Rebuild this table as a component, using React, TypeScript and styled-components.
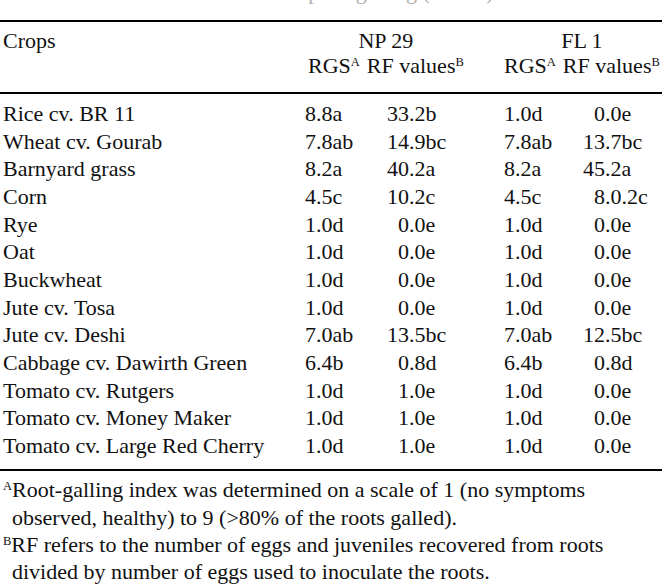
import React from "react";
import styled, { createGlobalStyle } from "styled-components";

const Global = createGlobalStyle`
  html, body { margin: 0; padding: 0; background: #ffffff; overflow: hidden; }
  body { font-family: "Liberation Serif", "Times New Roman", serif; color: #111; }
`;

const Page = styled.div`
  width: 666px;
  height: 586px;
  overflow: hidden;
  font-size: 22px;
`;

const Caption = styled.div`
  margin-top: -20px;
  height: 24px;
  line-height: 24px;
  text-align: center;
  white-space: nowrap;
  color: #b0b0b0;
`;

const Table = styled.div`
  margin-top: 16px;
  width: 662px;
  border-top: 2px solid #000;
  border-bottom: 2px solid #000;
`;

const Head = styled.div`
  display: grid;
  grid-template-columns: 308px 196px 1fr;
  padding: 6px 0 14px;
  border-bottom: 2px solid #000;
  line-height: 25px;
  white-space: nowrap;
`;

const HeadName = styled.div`
  padding-left: 3px;
`;

const Group = styled.div`
  display: inline-flex;
  flex-direction: column;
  align-items: center;
  justify-self: start;
`;

const SubRow = styled.div`
  display: flex;
  gap: 7px;
`;

const Sup = styled.sup`
  font-size: 12.5px;
  line-height: 0;
  vertical-align: 7px;
`;

const Body = styled.div`
  padding: 6px 0 9.5px;
`;

const Row = styled.div`
  display: grid;
  grid-template-columns: 305px 60px 139px 56px 1fr;
  line-height: 27.67px;
  white-space: nowrap;
`;

const Name = styled.div`
  padding-left: 3px;
`;

const Cell = styled.div``;

const Dec = styled.div`
  display: flex;
`;

const IntPart = styled.span<{ $w: number }>`
  flex: none;
  width: ${(p) => p.$w}px;
  text-align: right;
`;

const FracPart = styled.span``;

const Notes = styled.div`
  margin-top: 5px;
  width: 662px;
`;

const Note = styled.p`
  margin: 0;
  padding-left: 12px;
  text-indent: -9px;
  line-height: 27.3px;
`;

type Rec = [string, string, string, string, string];

const rows: Rec[] = [
  ["Rice cv. BR 11", "8.8a", "33.2b", "1.0d", "0.0e"],
  ["Wheat cv. Gourab", "7.8ab", "14.9bc", "7.8ab", "13.7bc"],
  ["Barnyard grass", "8.2a", "40.2a", "8.2a", "45.2a"],
  ["Corn", "4.5c", "10.2c", "4.5c", "8.0.2c"],
  ["Rye", "1.0d", "0.0e", "1.0d", "0.0e"],
  ["Oat", "1.0d", "0.0e", "1.0d", "0.0e"],
  ["Buckwheat", "1.0d", "0.0e", "1.0d", "0.0e"],
  ["Jute cv. Tosa", "1.0d", "0.0e", "1.0d", "0.0e"],
  ["Jute cv. Deshi", "7.0ab", "13.5bc", "7.0ab", "12.5bc"],
  ["Cabbage cv. Dawirth Green", "6.4b", "0.8d", "6.4b", "0.8d"],
  ["Tomato cv. Rutgers", "1.0d", "1.0e", "1.0d", "0.0e"],
  ["Tomato cv. Money Maker", "1.0d", "1.0e", "1.0d", "0.0e"],
  ["Tomato cv. Large Red Cherry", "1.0d", "1.0e", "1.0d", "0.0e"],
];

function Decimal({ value, w }: { value: string; w: number }) {
  const i = value.indexOf(".");
  return (
    <Dec>
      <IntPart $w={w}>{value.slice(0, i)}</IntPart>
      <FracPart>{value.slice(i)}</FracPart>
    </Dec>
  );
}

export default function App() {
  return (
    <Page>
      <Global />
      <Caption>Reaction of crops to galling (n = 10)</Caption>
      <Table>
        <Head>
          <HeadName>Crops</HeadName>
          <Group>
            <span>NP 29</span>
            <SubRow>
              <span>
                RGS<Sup>A</Sup>
              </span>
              <span>
                RF values<Sup>B</Sup>
              </span>
            </SubRow>
          </Group>
          <Group>
            <span>FL 1</span>
            <SubRow>
              <span>
                RGS<Sup>A</Sup>
              </span>
              <span>
                RF values<Sup>B</Sup>
              </span>
            </SubRow>
          </Group>
        </Head>
        <Body>
          {rows.map((r) => (
            <Row key={r[0]}>
              <Name>{r[0]}</Name>
              <Cell>{r[1]}</Cell>
              <Decimal value={r[2]} w={44} />
              <Cell>{r[3]}</Cell>
              <Decimal value={r[4]} w={45} />
            </Row>
          ))}
        </Body>
      </Table>
      <Notes>
        <Note>
          <Sup>A</Sup>Root-galling index was determined on a scale of 1 (no symptoms
          observed, healthy) to 9 (&gt;80% of the roots galled).
        </Note>
        <Note>
          <Sup>B</Sup>RF refers to the number of eggs and juveniles recovered from roots
          divided by number of eggs used to inoculate the roots.
        </Note>
      </Notes>
    </Page>
  );
}
